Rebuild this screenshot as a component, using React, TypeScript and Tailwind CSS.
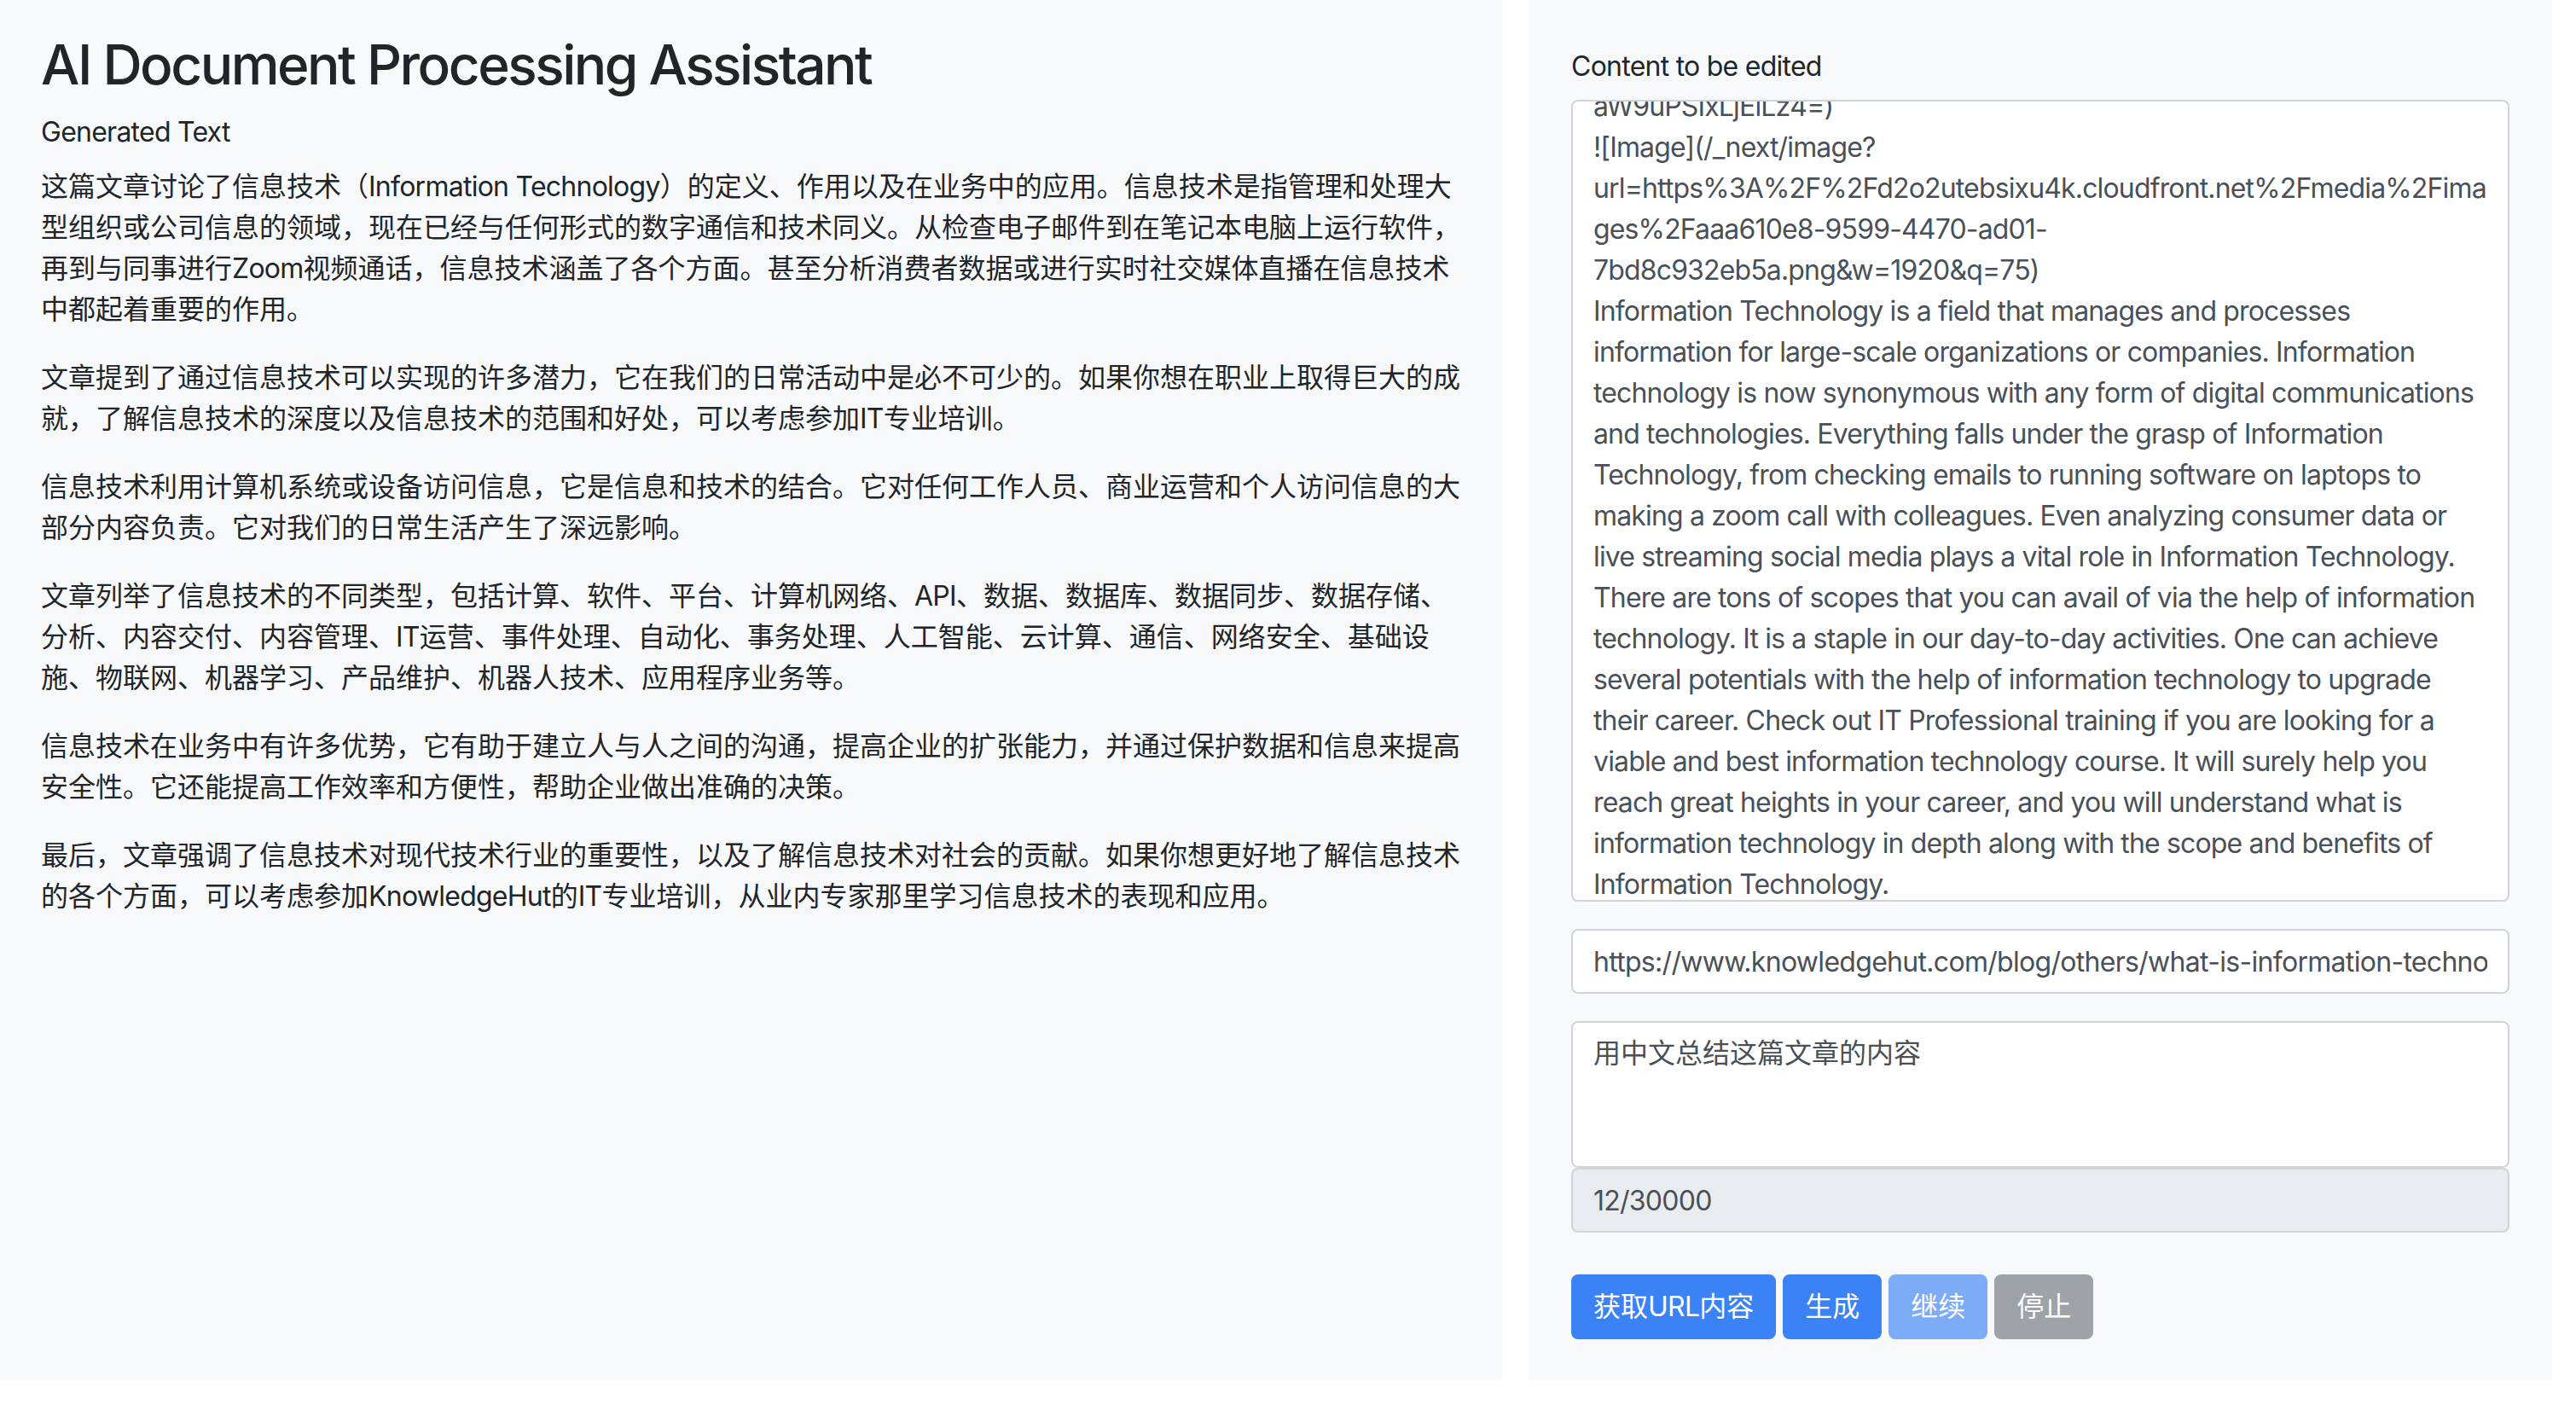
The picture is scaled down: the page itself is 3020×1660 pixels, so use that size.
import { useEffect, useRef } from "react";

const FONT = "font-['Inter','Noto_Sans_CJK_SC',sans-serif]";

const paragraphs = [
  "这篇文章讨论了信息技术（Information Technology）的定义、作用以及在业务中的应用。信息技术是指管理和处理大型组织或公司信息的领域，现在已经与任何形式的数字通信和技术同义。从检查电子邮件到在笔记本电脑上运行软件，再到与同事进行Zoom视频通话，信息技术涵盖了各个方面。甚至分析消费者数据或进行实时社交媒体直播在信息技术中都起着重要的作用。",
  "文章提到了通过信息技术可以实现的许多潜力，它在我们的日常活动中是必不可少的。如果你想在职业上取得巨大的成就，了解信息技术的深度以及信息技术的范围和好处，可以考虑参加IT专业培训。",
  "信息技术利用计算机系统或设备访问信息，它是信息和技术的结合。它对任何工作人员、商业运营和个人访问信息的大部分内容负责。它对我们的日常生活产生了深远影响。",
  "文章列举了信息技术的不同类型，包括计算、软件、平台、计算机网络、API、数据、数据库、数据同步、数据存储、分析、内容交付、内容管理、IT运营、事件处理、自动化、事务处理、人工智能、云计算、通信、网络安全、基础设施、物联网、机器学习、产品维护、机器人技术、应用程序业务等。",
  "信息技术在业务中有许多优势，它有助于建立人与人之间的沟通，提高企业的扩张能力，并通过保护数据和信息来提高安全性。它还能提高工作效率和方便性，帮助企业做出准确的决策。",
  "最后，文章强调了信息技术对现代技术行业的重要性，以及了解信息技术对社会的贡献。如果你想更好地了解信息技术的各个方面，可以考虑参加KnowledgeHut的IT专业培训，从业内专家那里学习信息技术的表现和应用。",
];

// lines above the visible part of the editor (scrolled out of view)
const hiddenLines = [
  "Blog / Others",
  "What is Information Technology?",
  "",
  "![Image](data:image/svg+xml;base64,",
  "PHN2ZyB3aWR0aD0iMTkyMCIgaGVpZ2h0PSIx",
  "MDgwIiB4bWxucz0iaHR0cDovL3d3dy53My5v",
];

const article =
  "Information Technology is a field that manages and processes information for large-scale organizations or companies. Information technology is now synonymous with any form of digital communications and technologies. Everything falls under the grasp of Information Technology, from checking emails to running software on laptops to making a zoom call with colleagues. Even analyzing consumer data or live streaming social media plays a vital role in Information Technology. There are tons of scopes that you can avail of via the help of information technology. It is a staple in our day-to-day activities. One can achieve several potentials with the help of information technology to upgrade their career. Check out IT Professional training if you are looking for a viable and best information technology course. It will surely help you reach great heights in your career, and you will understand what is information technology in depth along with the scope and benefits of Information Technology.";

const editorContent = [
  ...hiddenLines,
  "aW9uPSIxLjEiLz4=)",
  "![Image](/_next/image?url=https%3A%2F%2Fd2o2utebsixu4k.cloudfront.net%2Fmedia%2Fimages%2Faaa610e8-9599-4470-ad01-7bd8c932eb5a.png&w=1920&q=75)",
  article,
].join("\n");

// Latin runs inside Chinese text get the same tightening as the other Latin text
function Mixed({ text }: { text: string }) {
  const parts = text.split(/([A-Za-z0-9][A-Za-z0-9 ]*)/);
  return (
    <>
      {parts.map((part, i) =>
        i % 2 === 1 ? (
          <span key={i} className="tracking-[-0.75px]">
            {part}
          </span>
        ) : (
          part
        )
      )}
    </>
  );
}

export default function App() {
  const editorRef = useRef<HTMLTextAreaElement>(null);

  useEffect(() => {
    // keep the editor scrolled so the image link sits near the top
    if (editorRef.current) {
      editorRef.current.scrollTop = 30 + 48 * hiddenLines.length;
    }
  }, []);

  return (
    <div className={`flex items-stretch bg-white text-[32px] leading-[1.5] text-[#212529] ${FONT}`}>
      {/* Output panel */}
      <div className="w-[1762px] shrink-0 bg-[#f8f9fa] px-[48px] pt-[38px]">
        <h2 className="mb-[16px] text-[64px] font-medium leading-[1.2] tracking-[-2.5px]">
          AI Document Processing Assistant
        </h2>
        <div className="mb-[16px] tracking-[-0.75px]">Generated Text</div>
        {paragraphs.map((p, i) => (
          <p key={i} className="mb-[32px]">
            <Mixed text={p} />
          </p>
        ))}
      </div>

      <div className="w-[30px] shrink-0" />

      {/* Input panel */}
      <div className="flex w-[1200px] shrink-0 flex-col bg-[#f8f9fa] px-[50px] pt-[54px] pb-[47px]">
        <label className="mb-[15px] block tracking-[-0.75px]">Content to be edited</label>
        <textarea
          ref={editorRef}
          defaultValue={editorContent}
          className={`mb-[32px] block h-[940px] w-full resize-none overflow-hidden rounded-[8px] border-2 border-[#ced4da] bg-white px-[24px] py-[12px] text-[32px] leading-[1.5] tracking-[-0.85px] text-[#495057] outline-none ${FONT}`}
        />
        <input
          type="text"
          defaultValue="https://www.knowledgehut.com/blog/others/what-is-information-technology"
          className={`mb-[32px] block h-[76px] w-full rounded-[8px] border-2 border-[#ced4da] bg-white px-[24px] text-[32px] tracking-[-0.7px] text-[#495057] outline-none ${FONT}`}
        />
        <textarea
          defaultValue="用中文总结这篇文章的内容"
          className={`block h-[172px] w-full resize-none rounded-[8px] border-2 border-[#ced4da] bg-white px-[24px] py-[12px] text-[32px] leading-[1.5] text-[#495057] outline-none ${FONT}`}
        />
        <input
          type="text"
          readOnly
          defaultValue="12/30000"
          className={`block h-[76px] w-full rounded-[8px] border-2 border-[#ced4da] bg-[#e9ecef] px-[24px] text-[32px] tracking-[-0.75px] text-[#495057] outline-none ${FONT}`}
        />
        <div className="mt-[49px] flex gap-[8px]">
          <button className="h-[76px] rounded-[8px] border-2 border-[#3b82f6] bg-[#3b82f6] px-[24px] text-white">
            获取<span className="tracking-[-0.75px]">URL</span>内容
          </button>
          <button className="h-[76px] rounded-[8px] border-2 border-[#3b82f6] bg-[#3b82f6] px-[24px] text-white">
            生成
          </button>
          <button disabled className="h-[76px] rounded-[8px] border-2 border-[#7dacf7] bg-[#7dacf7] px-[24px] text-white">
            继续
          </button>
          <button disabled className="h-[76px] rounded-[8px] border-2 border-[#9da3a9] bg-[#9da3a9] px-[24px] text-white">
            停止
          </button>
        </div>
      </div>
    </div>
  );
}
